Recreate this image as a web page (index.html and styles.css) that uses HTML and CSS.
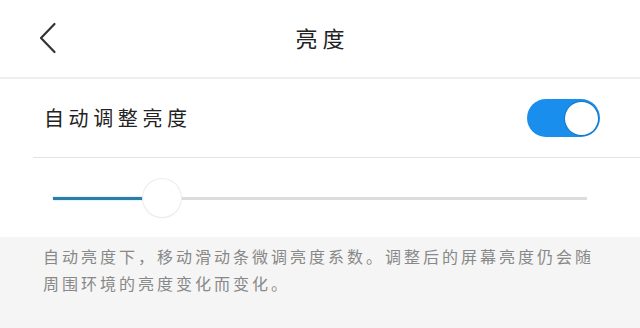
FILE: index.html
```html
<!DOCTYPE html>
<html lang="zh-CN">
<head>
<meta charset="utf-8">
<title>亮度</title>
<link rel="stylesheet" href="styles.css">
</head>
<body>
<header class="header">
  <div class="back">
    <svg width="18" height="32" viewBox="0 0 18 32" aria-hidden="true">
      <path d="M15.5 2 L2 16 L15.5 30" fill="none" stroke="#333" stroke-width="2.2" stroke-linecap="round" stroke-linejoin="round"/>
    </svg>
  </div>
  <h1 class="title">亮度</h1>
  <div></div>
</header>
<section class="row-wrap">
  <div class="row">
    <span class="row-label">自动调整亮度</span>
    <div class="toggle"><div class="toggle-knob"></div></div>
  </div>
</section>
<section class="slider">
  <div class="track">
    <div class="fill" style="width:92px"></div>
    <div class="knob" style="left:90px"></div>
  </div>
</section>
<section class="desc">
  <p>自动亮度下，移动滑动条微调亮度系数。调整后的屏幕亮度仍会随周围环境的亮度变化而变化。</p>
</section>
</body>
</html>
```
FILE: styles.css
```css
html, body {
  margin: 0;
  padding: 0;
  background: #ffffff;
  font-family: "Noto Sans CJK SC", "Noto Sans", sans-serif;
}
body {
  width: 640px;
  height: 328px;
  overflow: hidden;
  display: flex;
  flex-direction: column;
}
.header {
  height: 77px;
  display: grid;
  grid-template-columns: 1fr auto 1fr;
  align-items: center;
  border-bottom: 2px solid #eeeeee;
}
.back {
  padding-left: 39px;
  display: flex;
  align-items: center;
  padding-bottom: 2px;
}
.title {
  margin: 0;
  font-size: 22px;
  font-weight: 400;
  color: #222;
  letter-spacing: 5px;
  padding-left: 5px;
  line-height: 1;
  padding-bottom: 3px;
}
.row-wrap {
  margin-left: 33px;
  border-bottom: 1px solid #e4e4e4;
}
.row {
  height: 78px;
  display: flex;
  align-items: center;
  justify-content: space-between;
  padding: 0 40px 0 11px;
}
.row-label {
  font-size: 20px;
  letter-spacing: 4.6px;
  color: #222;
  line-height: 1;
}
.toggle {
  width: 73px;
  height: 38px;
  border-radius: 19px;
  background: #1a8eec;
  display: flex;
  align-items: center;
  justify-content: flex-end;
  padding-right: 2px;
  box-sizing: border-box;
}
.toggle-knob {
  width: 33px;
  height: 33px;
  border-radius: 50%;
  background: #fff;
  box-shadow: 0 0 0 1px #1577c6;
}
.slider {
  height: 79px;
  padding: 0 53px;
  display: flex;
  align-items: center;
}
.track {
  position: relative;
  flex: 1;
  height: 3px;
  background: #dcdcdc;
  margin-top: 2px;
}
.fill {
  height: 3px;
  background: #2c7ea6;
  box-shadow: 0 0 2px #8fd8f0;
}
.knob {
  position: absolute;
  top: -18px;
  width: 38px;
  height: 38px;
  border-radius: 50%;
  background: #fff;
  box-shadow: 0 0 0 1px #ececec, 0 1px 2px rgba(0,0,0,0.08);
}
.desc {
  flex: 1;
  background: #f5f5f5;
  padding: 6px 37px 0 43px;
}
.desc p {
  margin: 0;
  font-size: 16px;
  letter-spacing: 3px;
  line-height: 27px;
  color: #888888;
}
```
